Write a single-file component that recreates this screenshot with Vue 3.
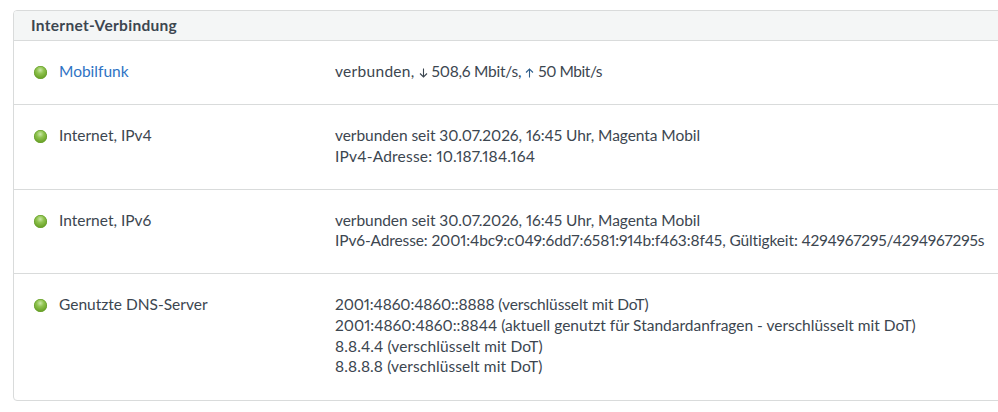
<script setup>
const rows = [
  { label: 'Mobilfunk', link: true, lines: [] },
  { label: 'Internet, IPv4', lines: [
    { t: 'verbunden seit 30.07.2026, 16:45 Uhr, Magenta Mobil', c: 'snug' },
    { t: 'IPv4-Adresse: 10.187.184.164', c: 'wide' },
  ] },
  { label: 'Internet, IPv6', lines: [
    { t: 'verbunden seit 30.07.2026, 16:45 Uhr, Magenta Mobil', c: 'snug' },
    { t: 'IPv6-Adresse: 2001:4bc9:c049:6dd7:6581:914b:f463:8f45, Gültigkeit: 4294967295/4294967295s', c: 'tight' },
  ] },
  { label: 'Genutzte DNS-Server', lines: [
    { t: '2001:4860:4860::8888 (verschlüsselt mit DoT)', c: 'tight' },
    { t: '2001:4860:4860::8844 (aktuell genutzt für Standardanfragen - verschlüsselt mit DoT)', c: '' },
    { t: '8.8.4.4 (verschlüsselt mit DoT)', c: 'open' },
    { t: '8.8.8.8 (verschlüsselt mit DoT)', c: 'open' },
  ] },
]
</script>

<template>
  <div class="page">
    <section class="card">
      <h2 class="head">Internet-Verbindung</h2>
      <div v-for="row in rows" :key="row.label" class="row">
        <span class="led"></span>
        <div class="label" :class="{ link: row.link }">{{ row.label }}</div>
        <div class="value">
          <div v-if="row.link" class="speed">
            <span class="open">verbunden,</span>
            <svg class="arrow" viewBox="0 0 9 10" width="9" height="10"><path d="M4.5 0.5V9M1 5.5L4.5 9L8 5.5" fill="none" stroke="#3c4650" stroke-width="1.1"/></svg>
            <span class="tight2">508,6 Mbit/s,</span>
            <svg class="arrow" viewBox="0 0 9 10" width="9" height="10"><path d="M4.5 9.5V1M1 4.5L4.5 1L8 4.5" fill="none" stroke="#2f5f8c" stroke-width="1.1"/></svg>
            <span class="tight3">50 Mbit/s</span>
          </div>
          <div v-for="line in row.lines" :key="line.t" :class="line.c">{{ line.t }}</div>
        </div>
      </div>
    </section>
  </div>
</template>

<style scoped>
.page {
  width: 998px;
  height: 412px;
  overflow: hidden;
  background: #fff;
  padding: 10px 0 0 13px;
  box-sizing: border-box;
  font-family: Lato, sans-serif;
  font-size: 15.5px;
  font-feature-settings: "pnum";
  color: #3c4650;
}
.card {
  width: 1000px;
  height: 391px;
  box-sizing: border-box;
  border: 1px solid #d9dbdb;
  border-radius: 4px;
  overflow: hidden;
}
.head {
  margin: 0;
  height: 30px;
  box-sizing: border-box;
  background: #f4f6f6;
  border-bottom: 1px solid #d9dbdb;
  padding-left: 17px;
  font-size: 15.5px;
  letter-spacing: 0.3px;
  font-weight: 700;
  line-height: 29px;
}
.row {
  display: flex;
  align-items: flex-start;
  padding: 20px 0 22.4px 20px;
  border-bottom: 1px solid #d9dbdb;
  line-height: 20.625px;
}
.row:last-child { border-bottom: 0; }
.led {
  flex: none;
  width: 13px;
  height: 13px;
  margin: 5px 12px 0 0;
  border-radius: 50%;
  background: radial-gradient(circle at 48% 32%, #cbe7a8 0, #8fc34f 32%, #6ea52c 68%, #7fb436 100%);
  box-shadow: inset 0 0 0 0.5px #5f9a22;
}
.label { width: 276px; flex: none; }
.link { color: #2f73c4; }
.value { white-space: nowrap; }
.arrow { vertical-align: -1px; margin: 0 4px; }
.snug { letter-spacing: -0.06px; }
.wide { letter-spacing: 0.2px; }
.tight { letter-spacing: -0.12px; }
.open { letter-spacing: 0.1px; }
.speed .open { letter-spacing: 0.3px; }
.tight2 { letter-spacing: -0.25px; }
.tight3 { letter-spacing: -0.45px; }
</style>
